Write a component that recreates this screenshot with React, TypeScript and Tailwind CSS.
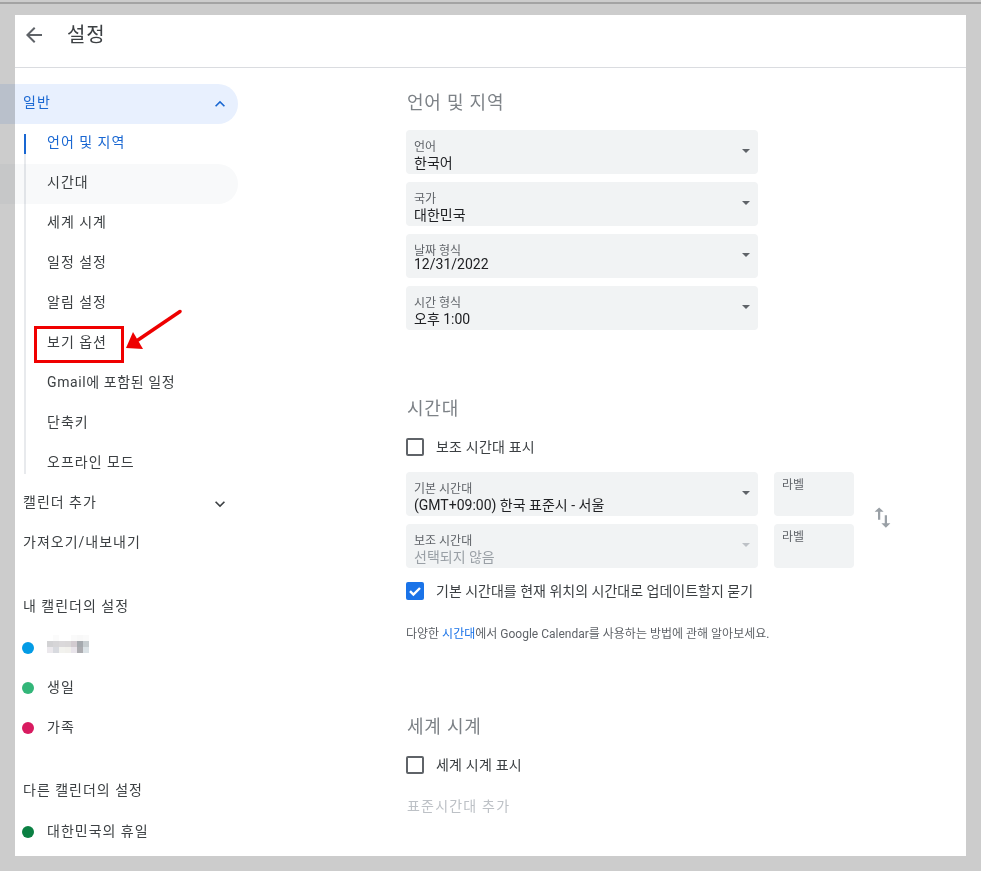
function Caret({ light }: { light?: boolean }) {
  return (
    <svg width="8" height="4" viewBox="0 0 8 4" className={`-mt-[2px] ${light ? "fill-[#bdc1c6]" : "fill-[#5f6368]"}`}>
      <path d="M0 0h8L4 4z" />
    </svg>
  );
}

function SelectField({ label, value, disabled, tight }: { label: string; value: string; disabled?: boolean; tight?: boolean }) {
  return (
    <div className="w-[352px] h-11 rounded-[4px] bg-[#f1f3f4] pl-[8px] pr-[8px] flex items-center justify-between">
      <div className="self-start pt-[10px]">
        <div className="text-[12px] leading-[14px] text-[#5f6368]">{label}</div>
        <div className={`text-[14px] ${tight ? "leading-[12px]" : "leading-[18px]"} ${disabled ? "text-[#9aa0a6]" : "text-[#202124]"}`}>{value}</div>
      </div>
      <Caret light={disabled} />
    </div>
  );
}

function LabelField() {
  return (
    <div className="w-20 h-11 rounded-[4px] bg-[#f1f3f4] pl-[8px] pt-[5px] text-[12px] leading-[16px] text-[#5f6368]">라벨</div>
  );
}

function Checkbox({ checked }: { checked?: boolean }) {
  if (checked) {
    return (
      <div className="w-[18px] h-[18px] rounded-[2px] bg-[#1a73e8] flex items-center justify-center shrink-0">
        <svg width="14" height="14" viewBox="0 0 14 14" fill="none" stroke="#fff" strokeWidth="2.4">
          <path d="M2 7.2l3.4 3.4L12 4" />
        </svg>
      </div>
    );
  }
  return <div className="w-[18px] h-[18px] rounded-[2px] border-2 border-[#5f6368] shrink-0" />;
}

function Chevron({ up }: { up?: boolean }) {
  return (
    <svg width="20" height="20" viewBox="0 0 24 24" className={up ? "fill-[#1967d2]" : "fill-[#3c4043]"}>
      <path d={up ? "M12 8l-6 6 1.41 1.41L12 10.83l4.59 4.58L18 14z" : "M16.59 8.59L12 13.17 7.41 8.59 6 10l6 6 6-6z"} />
    </svg>
  );
}

const subItems = ["시간대", "세계 시계", "일정 설정", "알림 설정", "보기 옵션", "Gmail에 포함된 일정", "단축키", "오프라인 모드"];

function SubItem({ text, hover }: { text: string; hover?: boolean }) {
  return (
    <div className={`relative h-10 flex items-center pl-[21px] pb-1 text-[14px] text-[#3c4043] ${text.startsWith("Gmail") ? "tracking-[0.6px]" : "tracking-[1px]"}`}>
      {hover && <div className="absolute -left-[26px] w-[238px] h-10 top-0 rounded-r-[20px] bg-[#f8f9fa] mix-blend-multiply" />}
      <span className="relative">{text}</span>
    </div>
  );
}

function CalendarRow({ color, name }: { color: string; name: string }) {
  return (
    <div className="h-10 flex items-center pl-[7px] text-[14px] tracking-[1px] text-[#3c4043]">
      <span className={`w-3 h-3 rounded-full mr-[13px] ${color}`} />
      <span className="pb-[2px]">{name}</span>
    </div>
  );
}

// pixelated name, 7 x 3 mosaic
const mosaic = [
  "#ffffff", "#fbfbfb", "#ffffff", "#ffffff", "#fafafa", "#f8f8f8", "#fafafa",
  "#d2d2d4", "#d6d5d7", "#dad8da", "#d9d7d8", "#d2cbd0", "#a5a9ae", "#c6cccf",
  "#ebe8ec", "#d8dadf", "#f2f2ee", "#f1f0ec", "#e8e4ea", "#acacb0", "#dbe2e6",
];

function BlurredName() {
  return (
    <div className="grid grid-cols-7 grid-rows-3 w-[42px] h-[18px] mb-2">
      {mosaic.map((c, i) => (
        <div key={i} style={{ backgroundColor: c }} />
      ))}
    </div>
  );
}

function Sidebar() {
  return (
    <aside className="w-[223px] shrink-0 pt-4">
      <div className="-ml-[15px] h-10 rounded-r-[20px] bg-[#e8f0fe] mix-blend-multiply flex items-center justify-between pl-[23px] pr-[8px] text-[14px] tracking-[1px] text-[#1967d2]">
        <span className="pb-1">일반</span>
        <Chevron up />
      </div>
      <div className="relative flow-root ml-[9px] my-[10px] border-l-2 border-[#e8eaed]">
        <div className="absolute -left-[2px] top-0 w-[2px] h-5 bg-[#1967d2]" />
        <div className="-mt-[10px] h-10 flex items-center pl-[21px] pb-1 text-[14px] tracking-[1px] text-[#1967d2]">언어 및 지역</div>
        {subItems.map((s, i) => (
          <div key={s} className={i === subItems.length - 1 ? "-mb-[10px]" : ""}>
            <SubItem text={s} hover={i === 0} />
          </div>
        ))}
      </div>
      <div className="h-10 flex items-center justify-between pl-2 pr-[8px] text-[14px] tracking-[1px] text-[#3c4043]">
        <span className="pb-1">캘린더 추가</span>
        <Chevron />
      </div>
      <div className="h-10 flex items-center pl-2 pb-1 text-[14px] tracking-[1px] text-[#3c4043]">가져오기/내보내기</div>
      <div className="mt-6 h-10 flex items-center pl-2 pb-1 text-[14px] tracking-[1px] text-[#3c4043]">내 캘린더의 설정</div>
      <div className="h-10 flex items-center pl-[7px]">
        <span className="w-3 h-3 rounded-full mr-[13px] bg-[#039be5]" />
        <BlurredName />
      </div>
      <CalendarRow color="bg-[#33b679]" name="생일" />
      <CalendarRow color="bg-[#d81b60]" name="가족" />
      <div className="mt-6 h-10 flex items-center pl-2 pb-1 text-[14px] tracking-[1px] text-[#3c4043]">다른 캘린더의 설정</div>
      <CalendarRow color="bg-[#0b8043]" name="대한민국의 휴일" />
    </aside>
  );
}

function Content() {
  return (
    <main className="pl-[168px] flex-1">
      <h2 className="mt-[21px] h-7 pl-[1px] text-[18px] leading-7 tracking-[0.8px] text-[#7d8287]">언어 및 지역</h2>
      <div className="mt-[13px] flex flex-col gap-2">
        <SelectField label="언어" value="한국어" />
        <SelectField label="국가" value="대한민국" />
        <SelectField label="날짜 형식" value="12/31/2022" tight />
        <SelectField label="시간 형식" value="오후 1:00" />
      </div>

      <h2 className="mt-[64px] h-7 pl-[1px] pt-[1px] text-[18px] leading-7 tracking-[0.8px] text-[#7d8287]">시간대</h2>
      <div className="mt-[16px] flex items-center gap-3 h-[18px] text-[14px] tracking-[0.2px] text-[#3c4043]">
        <Checkbox />
        <span>보조 시간대 표시</span>
      </div>
      <div className="mt-[16px] flex items-center">
        <div className="flex flex-col gap-2">
          <div className="flex gap-4">
            <SelectField label="기본 시간대" value="(GMT+09:00) 한국 표준시 - 서울" />
            <LabelField />
          </div>
          <div className="flex gap-4">
            <SelectField label="보조 시간대" value="선택되지 않음" disabled />
            <LabelField />
          </div>
        </div>
        <svg width="27" height="27" viewBox="0 0 24 24" className="ml-[15px] -mt-[6px] fill-[#9aa0a6]">
          <path d="M16 17.01V10h-2v7.01h-3L15 21l4-3.99h-3zM9 3L5 6.99h3V14h2V6.99h3L9 3z" />
        </svg>
      </div>
      <div className="mt-[14px] flex items-center gap-3 h-[18px] text-[14px] text-[#3c4043]">
        <Checkbox checked />
        <span>기본 시간대를 현재 위치의 시간대로 업데이트할지 묻기</span>
      </div>
      <p className="mt-[26px] text-[12px] leading-4 text-[#5f6368]">
        다양한 <span className="text-[#1a73e8]">시간대</span>에서 Google Calendar를 사용하는 방법에 관해 알아보세요.
      </p>

      <h2 className="mt-[71px] h-7 pl-[1px] text-[18px] leading-7 tracking-[0.8px] text-[#7d8287]">세계 시계</h2>
      <div className="mt-[15px] flex items-center gap-3 h-[18px] text-[14px] tracking-[0.2px] text-[#3c4043]">
        <Checkbox />
        <span>세계 시계 표시</span>
      </div>
      <div className="mt-[22px] pl-[1px] text-[14px] leading-5 tracking-[1.2px] text-[#bdc1c6]">표준시간대 추가</div>
    </main>
  );
}

export default function App() {
  return (
    <div className="relative w-[981px] h-[871px] overflow-hidden bg-[#cccccc] font-['Roboto','Noto_Sans_CJK_KR',sans-serif]">
      <div className="h-[2px] mt-[2px] bg-[#a3a3a3]" />
      <div className="ml-[15px] mt-[11px] w-[951px] h-[841px] bg-white">
        <header className="h-[53px] border-b border-[#dadce0] flex items-start pt-[7px] pl-[7px]">
          <svg width="24" height="24" viewBox="0 0 24 24" className="mt-[1px] fill-[#5f6368]">
            <path d="M20 11H7.83l5.59-5.59L12 4l-8 8 8 8 1.41-1.41L7.83 13H20v-2z" />
          </svg>
          <h1 className="ml-[21px] mt-[1px] text-[20px] leading-6 tracking-[0.8px] text-[#3c4043]">설정</h1>
        </header>
        <div className="flex">
          <Sidebar />
          <Content />
        </div>
      </div>
      {/* annotation */}
      <div className="absolute left-[34px] top-[326px] w-[90px] h-[37px] border-[3px] border-[#f00000]" />
      <svg className="absolute left-[120px] top-[305px]" width="66" height="50" viewBox="0 0 66 50">
        <path d="M60 6.5L18 35" stroke="#ee0000" strokeWidth="3.5" strokeLinecap="round" />
        <path d="M6 43L13 27l10 17z" fill="#ee0000" />
      </svg>
    </div>
  );
}
